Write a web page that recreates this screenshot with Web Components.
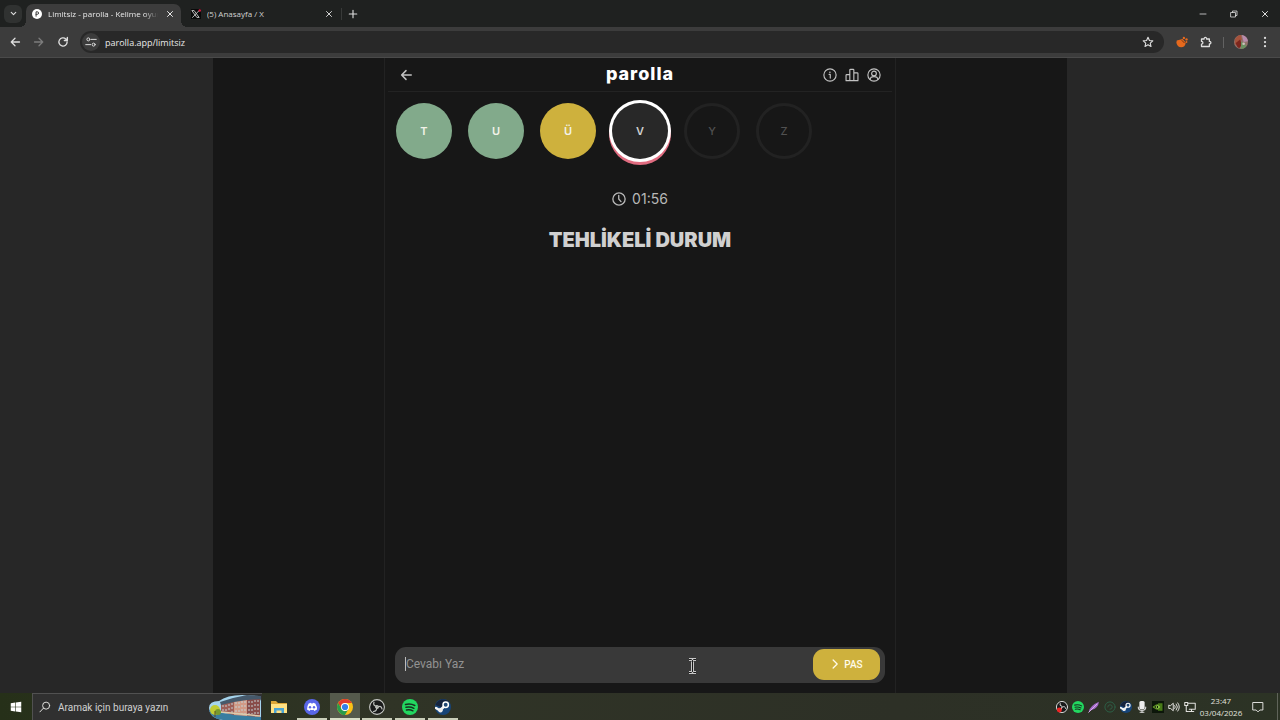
<!DOCTYPE html>
<html lang="tr">
<head>
<meta charset="utf-8">
<meta name="viewport" content="width=device-width, initial-scale=1">
<title>Limitsiz - parolla - Kelime oyunu</title>
<style>
  html, body {
    margin: 0;
    height: 100%;
    background: #171717;
  }
</style>
</head>
<body>
<desktop-screen></desktop-screen>

<script>
// line icons use the current text colour, the others bring their own fills
const ICONS = {
  chevronDown: `<path d="M4 6l4 4 4-4" stroke-width="2"/>`,
  close: `<path d="M3 3l10 10M13 3L3 13" stroke-width="2"/>`,
  plus: `<path d="M8 2v12M2 8h12" stroke-width="1.8"/>`,
  minimize: `<path d="M2 8h12" stroke-width="1.6"/>`,
  restore: `<path d="M2 5h9v9H2zM5 5V2h9v9h-3" stroke-width="1.6"/>`,
  back: `<path d="M14 8H3M8 3L3 8l5 5" stroke-width="1.7"/>`,
  forward: `<path d="M2 8h11M8 3l5 5-5 5" stroke-width="1.7"/>`,
  reload: `<path d="M13.5 8A5.5 5.5 0 1 1 11.8 4L13.5 5.700M13.800 2v4h-4" stroke-width="1.8"/>`,
  tune: `<circle cx="4.500" cy="4.500" r="2"/><path d="M8.500 4.500H15M1 11.500h6.500"/><circle cx="11.500" cy="11.500" r="2"/>`,
  star: `<path d="M8 1.800l1.900 4.200 4.500.5-3.400 3 1 4.500L8 11.700 4 14l1-4.500-3.400-3 4.500-.5z" stroke-width="1.5"/>`,
  puzzle: `<path d="M2 4h3.500c-.4-2.700 3.700-2.700 3.300 0H12.500v3.300c2.700-.4 2.700 3.700 0 3.300V14H2v-3.300c2.500 0 2.500-3.400 0-3.400z" stroke-width="1.7"/>`,
  dots: `<g fill="currentColor" stroke="none"><circle cx="8" cy="2.500" r="1.500"/><circle cx="8" cy="8" r="1.500"/><circle cx="8" cy="13.500" r="1.500"/></g>`,
  info: `<circle cx="8" cy="8" r="7"/><path d="M7 7.300h1.300v4.200" stroke-width="1.300"/><circle cx="7.900" cy="4.800" r=".9" fill="currentColor" stroke="none"/>`,
  chart: `<path d="M1.200 14.500V8.300q0-.8.8-.8h3.500v7zM5.500 14.500V2.300q0-.8.8-.8h3q.8 0 .8.8v12.200zM10.100 5.500h3.900q.8 0 .8.8v8.200h-4.700z"/>`,
  user: `<circle cx="8" cy="8" r="7"/><circle cx="8" cy="6.300" r="2.700"/><path d="M3.600 13.200c.3-4.400 8.500-4.400 8.800 0"/>`,
  clock: `<circle cx="8" cy="8" r="7" stroke-width="1.500"/><path d="M7.700 3.800V8l2.600 3" stroke-width="1.500"/>`,
  chevronRight: `<path d="M5 1.500L11.500 8 5 14.500" stroke-width="2"/>`,
  search: `<circle cx="9.500" cy="6.200" r="4.700"/><path d="M6 9.500L1.200 14.500"/>`,
  speaker: `<path d="M1 6v4h2.500L7 13V3L3.500 6zM9 6q1.700 2 0 4M11 4q3.300 4 0 8M13 2.500q4.300 5.500 0 11" stroke-width="1.300"/>`,
  network: `<path d="M5 3h10v8H7M10 11v3M7 14h6M1 2h4v4H1zM3 6v8h3" stroke-width="1.400"/>`,
  note: `<path d="M1.500 2h13v10H10.500L8 14.500 5.500 12h-4z" stroke-width="1.300"/>`,
  windows: `<path fill="#fff" stroke="none" d="M1 3l6-.9v5.500H1zM7.800 2L15 1v6.600H7.800zM1 8.400h6v5.500L1 13zM7.800 8.400H15V15l-7.200-1z"/>`,
  parolla: `<circle cx="8" cy="8" r="8" fill="#fff" stroke="none"/><path d="M6.500 11.500v-7h2q2 0 2 2t-2 2h-2" stroke="#333" stroke-width="1.500"/>`,
  x: `<rect width="16" height="16" fill="#090909" stroke="none"/><path d="M2 2.500h3l8 11h-3zM13 2.500L2.500 13.500" stroke="#ddd" stroke-width="1.300"/><circle cx="14" cy="2.500" r="2" fill="#d51c43" stroke="none"/>`,
  ember: `<g fill="#e6691d" stroke="none"><path d="M1 6l8-2 4 5q-1 6-6 6T.500 9z"/><circle cx="10.500" cy="2.500" r="1.600"/><circle cx="14" cy="4.500" r="1.600"/><circle cx="14" cy="8" r="1.200"/></g><path d="M8 6l3 3" stroke="#71320f"/>`,
  avatar: `<circle cx="8" cy="8" r="8" fill="#92726b" stroke="none"/><g stroke="none"><path d="M1 5Q4 0 8 0l1 5-5 5-3 1z" fill="#a5533c"/><path d="M9 0q6 1 7 7l-5 1z" fill="#b78cad"/><path d="M2 9l5-4 2 6-3 4Q3 14 2 9z" fill="#7d261d"/><path d="M8 8l4 1 2 4q-3 3-6 3z" fill="#6a9161"/><circle cx="11" cy="10" r="1.500" fill="#d0c0bd"/></g>`,
  folder: `<g stroke="none"><path fill="#dca638" d="M0 2h5l2 2h9v10H0z"/><path fill="#ffe184" d="M0 5h16v9H0z"/><path fill="#4aa4d4" d="M3 9h10v5h-2.500v-2.500h-5V14H3z"/></g>`,
  discord: `<circle cx="8" cy="8" r="8" fill="#5966e8" stroke="none"/><path fill="#fff" stroke="none" d="M4.700 4.400L7 3.800l.4.800h1.200l.4-.8 2.300.6q2 3 1.700 6.200-1.300 1-2.600 1.300l-.8-1.200q-1.600.5-3.200 0l-.8 1.200Q4.300 11.600 3 10.600q-.2-3.400 1.700-6.200z"/><g fill="#5966e8" stroke="none"><circle cx="6" cy="8.200" r="1.200"/><circle cx="10" cy="8.200" r="1.200"/></g>`,
  chrome: `<g stroke="none"><circle cx="8" cy="8" r="8" fill="#fbc116"/><path fill="#e33b2e" d="M1.100 4A8 8 0 0 1 14.900 4H8L4.600 10z"/><path fill="#289d4b" d="M1.100 4l3.500 6 3.400 2-2 3.700A8 8 0 0 1 1.100 4z"/><path fill="#289d4b" d="M8 12l3.400-2L8 16q-2 0-3-.5z"/><circle cx="8" cy="8" r="4" fill="#fff"/><circle cx="8" cy="8" r="3.100" fill="#347ee8"/></g>`,
  obs: `<circle cx="8" cy="8" r="7.400" fill="#191a1a" stroke="#c7c9c5" stroke-width="1.100"/><g stroke="#bfc2bd" stroke-width="1.200"><path d="M7.500 7.200Q3.700 6.500 5 3.200M8.300 8.300Q12.500 6 13 10M7.700 8.400Q8 12.500 4.500 12.500"/><circle cx="8" cy="8" r="1.300"/></g>`,
  obsRecord: `<circle cx="8" cy="8" r="7.400" fill="#191a1a" stroke="#ddd"/><path d="M7.500 7Q4 6 5.500 3.500M8.500 8Q12 6 13 10M8 8Q8 12 5 12.500" stroke="#ddd"/><circle cx="4.500" cy="12" r="3.300" fill="#ef2222" stroke="none"/>`,
  spotify: `<circle cx="8" cy="8" r="8" fill="#22d760" stroke="none"/><path d="M3.500 5.500q5-1.300 9.300 1M4 8.300q4.300-1 7.900 1M4.500 11q3.500-.8 6.400.8" stroke="#17321f" stroke-width="1.500"/>`,
  steam: `<circle cx="8" cy="8" r="8" fill="#174579" stroke="none"/><path d="M.5 6A8 8 0 0 1 14 3L8 9z" fill="#15233d" stroke="none"/><path d="M1 9l4 2.500 5-5" stroke="#f4f5f6" stroke-width="2.600"/><circle cx="5.500" cy="11.200" r="2.200" fill="#eee" stroke="none"/><circle cx="10.700" cy="5.700" r="2.700" fill="#214873" stroke="#fff" stroke-width="1.500"/>`,
  feather: `<path d="M1 14Q3 6 14.500 1 14 9 5 12z" fill="#a369c9" stroke="none"/><path d="M1 15L12 4" stroke="#ddb3ec"/>`,
  ring: `<circle cx="8" cy="8" r="6.800" stroke="#2c6147"/><path d="M5 8a3 3 0 1 1 3 3" stroke="#315c45"/>`,
  mic: `<rect x="4.500" y="0" width="7" height="11" rx="2" fill="#eee" stroke="none"/><path d="M3 8q0 4.500 5 4.500T13 8M8 12v4M5.500 15h5" stroke="#d7d7d7" stroke-width="1.500"/>`,
  nvidia: `<rect width="16" height="16" fill="#0c160a" stroke="none"/><path d="M2 8q5-6 11 0-6 6-11 0z" stroke="#75b52b"/><path d="M8 3h6v10H8z" fill="#487b18" stroke="none"/><circle cx="7.500" cy="8" r="2" stroke="#9bd551"/>`
};

class UiIcon extends HTMLElement {
  constructor() {
    super();
    this.attachShadow({ mode: "open" });
  }

  connectedCallback() {
    this.shadowRoot.innerHTML = `
      <style>
        :host {
          display: inline-flex;
          flex: none;
          width: var(--size, 12px);
          height: var(--size, 12px);
        }

        svg {
          width: 100%;
          height: 100%;
          fill: none;
          stroke: currentColor;
          stroke-width: 1.3;
          stroke-linejoin: round;
          stroke-linecap: round;
        }
      </style>
      <svg viewBox="0 0 16 16" aria-hidden="true">${ICONS[this.getAttribute("name")]}</svg>`;
  }
}

class IconButton extends HTMLElement {
  constructor() {
    super();
    this.attachShadow({ mode: "open" });
  }

  connectedCallback() {
    this.shadowRoot.innerHTML = `
      <style>
        :host {
          display: inline-flex;
          flex: none;
        }

        button {
          display: flex;
          align-items: center;
          justify-content: center;
          width: var(--box, 24px);
          height: var(--box-height, var(--box, 24px));
          padding: 0;
          border: 0;
          border-radius: var(--radius, 0);
          background: var(--fill, none);
          color: inherit;
        }
      </style>
      <button type="button" aria-label="${this.getAttribute("label")}">
        <ui-icon name="${this.getAttribute("icon")}"></ui-icon>
      </button>`;
  }
}

class BrowserTab extends HTMLElement {
  constructor() {
    super();
    this.attachShadow({ mode: "open" });
  }

  connectedCallback() {
    this.shadowRoot.innerHTML = `
      <style>
        :host {
          display: flex;
          align-items: center;
          box-sizing: border-box;
          width: 155px;
          height: 23px;
          padding: 0 5px 4px 6px;
          gap: 6px;
          color: #d2d2d2;
        }

        :host([active]) {
          position: relative;
          border-radius: 7px 7px 0 0;
          background: #3c3c3c;
          color: #e8e8e8;
        }

        :host([active])::before,
        :host([active])::after {
          content: "";
          position: absolute;
          bottom: 0;
          width: 6px;
          height: 6px;
        }

        :host([active])::before {
          right: 100%;
          background: radial-gradient(circle at 0 0, transparent 6px, #3c3c3c 6px);
        }

        :host([active])::after {
          left: 100%;
          background: radial-gradient(circle at 100% 0, transparent 6px, #3c3c3c 6px);
        }

        span {
          flex: 1;
          overflow: hidden;
          white-space: nowrap;
        }

        :host([active]) span {
          mask-image: linear-gradient(to right, #000 88%, transparent);
        }

        ui-icon { --size: 10px; }

        icon-button {
          --box: 12px;
          --size: 8px;
        }
      </style>
      <ui-icon name="${this.getAttribute("icon")}"></ui-icon>
      <span><slot></slot></span>
      <icon-button icon="close" label="Sekmeyi kapat"></icon-button>`;
  }
}

class BrowserChrome extends HTMLElement {
  constructor() {
    super();
    this.attachShadow({ mode: "open" });
    this.shadowRoot.innerHTML = `
      <style>
        :host {
          display: block;
          font: 8px "Open Sans", "Noto Sans", sans-serif;
          color: #dedede;
        }

        .tabs {
          display: flex;
          align-items: flex-end;
          height: 27px;
          padding-left: 4px;
          background: #1f2120;
        }

        .list {
          --box: 18px;
          --radius: 6px;
          --fill: #303231;
          --size: 9px;
          align-self: center;
          margin-right: 4px;
        }

        browser-tab + browser-tab { margin-left: 4px; }

        .new {
          --box: 22px;
          --size: 10px;
          border-left: 1px solid #383a39;
          --box-height: 12px;
          margin: 0 0 7px 1px;
        }

        .window {
          display: flex;
          margin-left: auto;
          --box: 31px;
          --box-height: 27px;
          --size: 8px;
        }

        .toolbar {
          display: flex;
          align-items: center;
          height: 30px;
          padding: 0 3px;
          background: #3c3c3c;
          border-bottom: 1px solid #4a4a4a;
          --size: 12px;
        }

        .disabled { color: #7c7c7c; }

        .address {
          display: flex;
          flex: 1;
          align-items: center;
          height: 22px;
          margin: 0 6px 0 5px;
          padding: 0 4px 0 2px;
          border-radius: 11px;
          background: #282828;
        }

        .site {
          --box: 18px;
          --radius: 9px;
          --fill: #3c3c3c;
        }

        input {
          flex: 1;
          min-width: 0;
          padding: 0 5px;
          border: 0;
          background: none;
          color: #e8e8e8;
          font: inherit;
          font-size: 9px;
        }

        hr {
          height: 11px;
          margin: 0 5px;
          border: 0;
          border-left: 1px solid #626262;
        }

        .profile { --size: 14px; }
      </style>
      <div class="tabs">
        <icon-button class="list" icon="chevronDown" label="Sekmelerde ara"></icon-button>
        <browser-tab icon="parolla" active>Limitsiz - parolla - Kelime oyunu</browser-tab>
        <browser-tab icon="x">(5) Anasayfa / X</browser-tab>
        <icon-button class="new" icon="plus" label="Yeni sekme"></icon-button>
        <div class="window">
          <icon-button icon="minimize" label="Simge durumuna küçült"></icon-button>
          <icon-button icon="restore" label="Geri yükle"></icon-button>
          <icon-button icon="close" label="Kapat"></icon-button>
        </div>
      </div>
      <div class="toolbar">
        <icon-button icon="back" label="Geri"></icon-button>
        <icon-button class="disabled" icon="forward" label="İleri"></icon-button>
        <icon-button icon="reload" label="Yenile"></icon-button>
        <div class="address">
          <icon-button class="site" icon="tune" label="Site bilgileri"></icon-button>
          <input type="text" aria-label="Adres" value="parolla.app/limitsiz">
          <icon-button icon="star" label="Yer işareti"></icon-button>
        </div>
        <icon-button icon="ember" label="Eklenti"></icon-button>
        <icon-button icon="puzzle" label="Uzantılar"></icon-button>
        <hr>
        <icon-button class="profile" icon="avatar" label="Profil"></icon-button>
        <icon-button icon="dots" label="Menü"></icon-button>
      </div>`;
  }
}

class LetterCircle extends HTMLElement {
  constructor() {
    super();
    this.attachShadow({ mode: "open" });
    this.shadowRoot.innerHTML = `
      <style>
        :host {
          display: flex;
          flex: none;
          align-items: center;
          justify-content: center;
          box-sizing: border-box;
          width: 56px;
          height: 56px;
          border: 3px solid #222;
          border-radius: 50%;
          color: #515151;
          font-size: 11px;
          font-weight: 500;
        }

        :host([state]) {
          border: 0;
          color: #f2f2e8;
          font-weight: 600;
        }

        :host([state="correct"]) { background: #82aa8b; }
        :host([state="passed"]) { background: #ceb13d; }

        :host([state="current"]) {
          background: #282828;
          color: #cfcfcf;
          box-shadow: 0 0 0 3px #fff, 0 3px 0 3px #e06c80;
        }
      </style>
      <slot></slot>`;
  }
}

class GameHeader extends HTMLElement {
  constructor() {
    super();
    this.attachShadow({ mode: "open" });
    this.shadowRoot.innerHTML = `
      <style>
        :host {
          display: grid;
          grid-template-columns: 1fr auto 1fr;
          align-items: center;
          height: 33px;
          margin: 0 3px;
          padding: 0 7px;
          border-bottom: 1px solid #232323;
          color: #c2c2c2;
          --size: 14px;
          --box: 22px;
        }

        h1 {
          margin: 0;
          padding-bottom: 2px;
          color: #fff;
          font-size: 18px;
          line-height: 24px;
          font-weight: 800;
          letter-spacing: 1px;
        }

        nav {
          display: flex;
          justify-content: flex-end;
        }
      </style>
      <icon-button icon="back" label="Geri"></icon-button>
      <h1>parolla</h1>
      <nav>
        <icon-button icon="info" label="Nasıl oynanır"></icon-button>
        <icon-button icon="chart" label="İstatistikler"></icon-button>
        <icon-button icon="user" label="Hesap"></icon-button>
      </nav>`;
  }
}

class AnswerBar extends HTMLElement {
  constructor() {
    super();
    this.attachShadow({ mode: "open" });
    this.shadowRoot.innerHTML = `
      <style>
        :host { display: block; }

        form {
          position: relative;
          display: flex;
          align-items: center;
          box-sizing: border-box;
          height: 36px;
          padding: 0 5px 2px 10px;
          border-radius: 11px;
          background: #393939;
        }

        form::before {
          content: "";
          width: 1px;
          height: 14px;
          background: #bcbcbc;
        }

        input {
          flex: 1;
          min-width: 0;
          padding: 0;
          border: 0;
          outline: 0;
          background: none;
          color: #eee;
          font: 12px Roboto, sans-serif;
        }

        input::placeholder { color: #929292; }

        button {
          display: flex;
          align-items: center;
          justify-content: center;
          gap: 4px;
          width: 67px;
          height: 31px;
          padding: 0;
          border: 0;
          border-radius: 11px;
          background: #ceb13d;
          color: #fffbe9;
          font: 500 10px Roboto, sans-serif;
        }

        ui-icon { --size: 10px; }

        .pointer {
          position: absolute;
          right: 188px;
          top: 11px;
          width: 9px;
          height: 16px;
          fill: none;
        }
      </style>
      <form>
        <input type="text" aria-label="Cevabı Yaz" placeholder="Cevabı Yaz" autocomplete="off">
        <button type="button"><ui-icon name="chevronRight"></ui-icon>PAS</button>
        <svg class="pointer" viewBox="0 0 9 16" aria-hidden="true">
          <path d="M1 1.500h2.500l1 1 1-1H8M4.500 2.500v11M1 14.500h2.500l1-1 1 1H8" stroke="#c8c8c8" stroke-width="3"/>
          <path d="M1 1.500h2.500l1 1 1-1H8M4.500 2.500v11M1 14.500h2.500l1-1 1 1H8" stroke="#181818"/>
        </svg>
      </form>`;
  }
}

class ParollaGame extends HTMLElement {
  constructor() {
    super();
    this.attachShadow({ mode: "open" });
    this.shadowRoot.innerHTML = `
      <style>
        :host {
          display: flex;
          justify-content: center;
          background: #272727;
          font-family: Inter, Roboto, sans-serif;
        }

        .page {
          display: flex;
          justify-content: center;
          width: 66.666%;
          background: #171717;
        }

        main {
          display: flex;
          flex-direction: column;
          box-sizing: border-box;
          width: 60%;
          border: solid #222;
          border-width: 0 1px;
        }

        .letters {
          display: flex;
          gap: 16px;
          padding: 11px 11px 0;
        }

        .timer {
          display: flex;
          align-items: center;
          justify-content: center;
          gap: 6px;
          margin-top: 30px;
          color: #b8b8b8;
          font-size: 14px;
          line-height: 20px;
          --size: 14px;
        }

        h2 {
          margin: 18px 0 0;
          color: #d0d0d0;
          font-size: 20px;
          line-height: 26px;
          font-weight: 900;
          text-align: center;
        }

        answer-bar { margin: auto 10px 10px; }
      </style>
      <div class="page">
        <main>
          <game-header></game-header>
          <div class="letters">
            <letter-circle state="correct">T</letter-circle>
            <letter-circle state="correct">U</letter-circle>
            <letter-circle state="passed">Ü</letter-circle>
            <letter-circle state="current">V</letter-circle>
            <letter-circle>Y</letter-circle>
            <letter-circle>Z</letter-circle>
          </div>
          <div class="timer"><ui-icon name="clock"></ui-icon><time>01:56</time></div>
          <h2>TEHLİKELİ DURUM</h2>
          <answer-bar></answer-bar>
        </main>
      </div>`;
  }
}

class TaskBar extends HTMLElement {
  constructor() {
    super();
    this.attachShadow({ mode: "open" });
    this.shadowRoot.innerHTML = `
      <style>
        :host {
          display: flex;
          align-items: stretch;
          height: 27px;
          background: linear-gradient(to right, #263019, #303426 30%, #2d3026 70%, #2c3325);
          color: #e2e2df;
          font: 8px "Open Sans", "Noto Sans", sans-serif;
        }

        .start {
          --box: 32px;
          --box-height: 27px;
          --size: 12px;
        }

        .search {
          display: flex;
          align-items: center;
          box-sizing: border-box;
          width: 230px;
          padding-left: 6px;
          gap: 7px;
          border: solid #515151;
          border-width: 1px 0 0 1px;
          background: #303030;
        }

        input {
          flex: 1;
          min-width: 0;
          padding: 0;
          border: 0;
          background: none;
          font: 10px Roboto, sans-serif;
        }

        input::placeholder { color: #d0d0d0; }

        .art {
          flex: none;
          width: 54px;
          height: 26px;
        }

        .apps {
          display: flex;
          width: 196px;
          margin-left: 1px;
          --box: 30px;
          --box-height: 27px;
          --size: 16px;
        }

        .apps icon-button {
          flex: 1;
          justify-content: center;
        }

        .open { --fill: linear-gradient(to top, #c9ceb9 2px, transparent 2px); }
        .active { --fill: linear-gradient(to top, #d9dec7 2px, #555a4c 2px); }

        .tray {
          display: flex;
          align-items: center;
          margin-left: auto;
          --box: 16px;
          --size: 12px;
        }

        time {
          width: 46px;
          text-align: center;
          line-height: 12px;
        }

        .notes {
          --box: 27px;
          margin-right: 3px;
          padding-right: 3px;
        }

        .edge {
          width: 2px;
          border-left: 1px solid #60645a;
        }
      </style>
      <icon-button class="start" icon="windows" label="Başlat"></icon-button>
      <div class="search">
        <ui-icon name="search"></ui-icon>
        <input type="search" aria-label="Aramak için buraya yazın" placeholder="Aramak için buraya yazın">
        <svg class="art" viewBox="0 0 54 26" aria-hidden="true">
          <path d="M1 14Q1 7 11 7 19 1 34 1L51 2l2 5v19H13Q1 23 1 14z" fill="#a5d4ed"/>
          <path d="M1 16l13 3 39 4v3H15Q3 25 1 16z" fill="#397da0"/>
          <path d="M13 9l13-3v15l-13-3z" fill="#9e5f58"/>
          <path d="M26 5l13-2v19l-13-1z" fill="#d19a86"/>
          <path d="M39 4l13-2v21l-13-1z" fill="#884c4a"/>
          <path d="M12 8l13-4 14-3 14 1v3l-14 1-13 2-13 3z" fill="#46596b"/>
          <path d="M15 11v6M18 11v7M21 10v8M24 9v10M28 8v12M31 8v12M34 7v13M37 7v13M41 7v13M44 7v13M47 6v14M50 6v14" stroke="#c3d0d4" stroke-dasharray="2 2"/>
          <path d="M13 18l39 4" stroke="#dbccad" stroke-width="1.500"/>
          <circle cx="7" cy="16" r="5" fill="#c1cc35"/>
          <circle cx="10" cy="18" r="3" fill="#789a2e"/>
          <path d="M7 17v6" stroke="#584b28"/>
        </svg>
      </div>
      <div class="apps">
        <icon-button icon="folder" label="Dosya Gezgini"></icon-button>
        <icon-button class="open" icon="discord" label="Discord"></icon-button>
        <icon-button class="active" icon="chrome" label="Chrome"></icon-button>
        <icon-button class="open" icon="obs" label="OBS Studio"></icon-button>
        <icon-button class="open" icon="spotify" label="Spotify"></icon-button>
        <icon-button class="open" icon="steam" label="Steam"></icon-button>
      </div>
      <div class="tray">
        <icon-button icon="obsRecord" label="OBS kayıtta"></icon-button>
        <icon-button icon="spotify" label="Spotify"></icon-button>
        <icon-button icon="feather" label="Not"></icon-button>
        <icon-button icon="ring" label="Bağlantı"></icon-button>
        <icon-button icon="steam" label="Steam"></icon-button>
        <icon-button icon="mic" label="Mikrofon"></icon-button>
        <icon-button icon="nvidia" label="NVIDIA"></icon-button>
        <icon-button icon="speaker" label="Ses"></icon-button>
        <icon-button icon="network" label="Ağ"></icon-button>
        <time>23:47<br>03/04/2026</time>
        <icon-button class="notes" icon="note" label="Bildirimler"></icon-button>
      </div>
      <div class="edge"></div>`;
  }
}

class DesktopScreen extends HTMLElement {
  constructor() {
    super();
    this.attachShadow({ mode: "open" });
    this.shadowRoot.innerHTML = `
      <style>
        :host {
          display: flex;
          flex-direction: column;
          min-height: 100vh;
        }

        parolla-game { flex: 1; }
      </style>
      <browser-chrome></browser-chrome>
      <parolla-game></parolla-game>
      <task-bar></task-bar>`;
  }
}

customElements.define("ui-icon", UiIcon);
customElements.define("icon-button", IconButton);
customElements.define("browser-tab", BrowserTab);
customElements.define("browser-chrome", BrowserChrome);
customElements.define("letter-circle", LetterCircle);
customElements.define("game-header", GameHeader);
customElements.define("answer-bar", AnswerBar);
customElements.define("parolla-game", ParollaGame);
customElements.define("task-bar", TaskBar);
customElements.define("desktop-screen", DesktopScreen);
</script>
</body>
</html>
